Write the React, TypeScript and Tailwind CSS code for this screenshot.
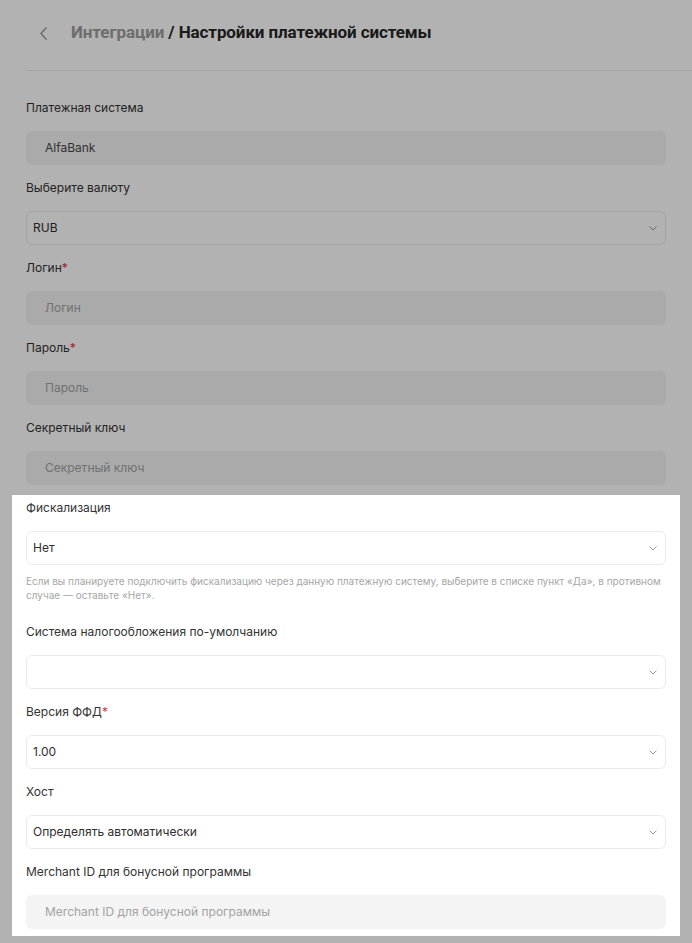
import React from "react";

const Chevron = () => (
  <svg width="8" height="5" viewBox="0 0 8 5" fill="none" className="shrink-0">
    <polyline points="0.5,0.5 4,4 7.5,0.5" stroke="#9a9a9a" strokeWidth="1" />
  </svg>
);

function Label({ text, required }: { text: string; required?: boolean }) {
  return (
    <div className="text-[12px] leading-[20px] text-[#333333] mb-[13px]">
      {text}
      {required && <span className="text-[#e0343b]">*</span>}
    </div>
  );
}

function DisabledInput({ value, placeholder }: { value?: string; placeholder?: string }) {
  return (
    <div className="h-[34px] rounded-[6px] bg-[#f4f4f4] flex items-center pl-[19px] text-[12px]">
      {value ? (
        <span className="text-[#474747]">{value}</span>
      ) : (
        <span className="text-[#a3a3a3]">{placeholder}</span>
      )}
    </div>
  );
}

function Select({ value }: { value?: string }) {
  return (
    <div className="h-[34px] rounded-[6px] border border-[#ebebeb] bg-white flex items-center justify-between pl-[6px] pr-[8px] text-[12px] text-[#2e2e2e]">
      <span>{value ?? ""}</span>
      <Chevron />
    </div>
  );
}

export default function App() {
  return (
    <div
      className="min-h-screen bg-white"
      style={{ fontFamily: "Inter, 'Noto Sans', sans-serif" }}
    >
      <div className="h-[71px] flex items-center pl-[14px] pb-[4px] border-b border-[#ececec] ml-[26px]">
        <svg width="7" height="13" viewBox="0 0 7 13" fill="none" className="mr-[24px]">
          <polyline points="6.5,0.5 0.8,6.5 6.5,12.5" stroke="#8a8a8a" strokeWidth="1.1" />
        </svg>
        <div
          className="text-[17px] font-bold tracking-[-0.1px]"
          style={{ fontFamily: "Roboto, 'Liberation Sans', sans-serif" }}
        >
          <span className="text-[#9d9d9d]">Интеграции</span>
          <span className="text-[#262626]"> / Настройки платежной системы</span>
        </div>
      </div>

      <div className="px-[26px] pt-[27px]">
        <div>
          <Label text="Платежная система" />
          <DisabledInput value="AlfaBank" />
        </div>
        <div className="mt-[13px]">
          <Label text="Выберите валюту" />
          <Select value="RUB" />
        </div>
        <div className="mt-[13px]">
          <Label text="Логин" required />
          <DisabledInput placeholder="Логин" />
        </div>
        <div className="mt-[13px]">
          <Label text="Пароль" required />
          <DisabledInput placeholder="Пароль" />
        </div>
        <div className="mt-[13px]">
          <Label text="Секретный ключ" />
          <DisabledInput placeholder="Секретный ключ" />
        </div>

        <div className="relative z-10 bg-white mt-[10px] -mx-[14px] px-[14px] pt-[3px] pb-[7px] shadow-[0_0_0_3000px_rgba(0,0,0,0.3)]">
          <div>
            <Label text="Фискализация" />
            <Select value="Нет" />
            <p className="mt-[9px] text-[10px] leading-[14px] text-[#a6a6a6] whitespace-nowrap">
              Если вы планируете подключить фискализацию через данную платежную систему, выберите в списке пункт «Да», в противном
              <br />
              случае — оставьте «Нет».
            </p>
          </div>
          <div className="mt-[20px]">
            <Label text="Система налогообложения по-умолчанию" />
            <Select />
          </div>
          <div className="mt-[13px]">
            <Label text="Версия ФФД" required />
            <Select value="1.00" />
          </div>
          <div className="mt-[13px]">
            <Label text="Хост" />
            <Select value="Определять автоматически" />
          </div>
          <div className="mt-[13px]">
            <Label text="Merchant ID для бонусной программы" />
            <DisabledInput placeholder="Merchant ID для бонусной программы" />
          </div>
        </div>
      </div>
    </div>
  );
}
